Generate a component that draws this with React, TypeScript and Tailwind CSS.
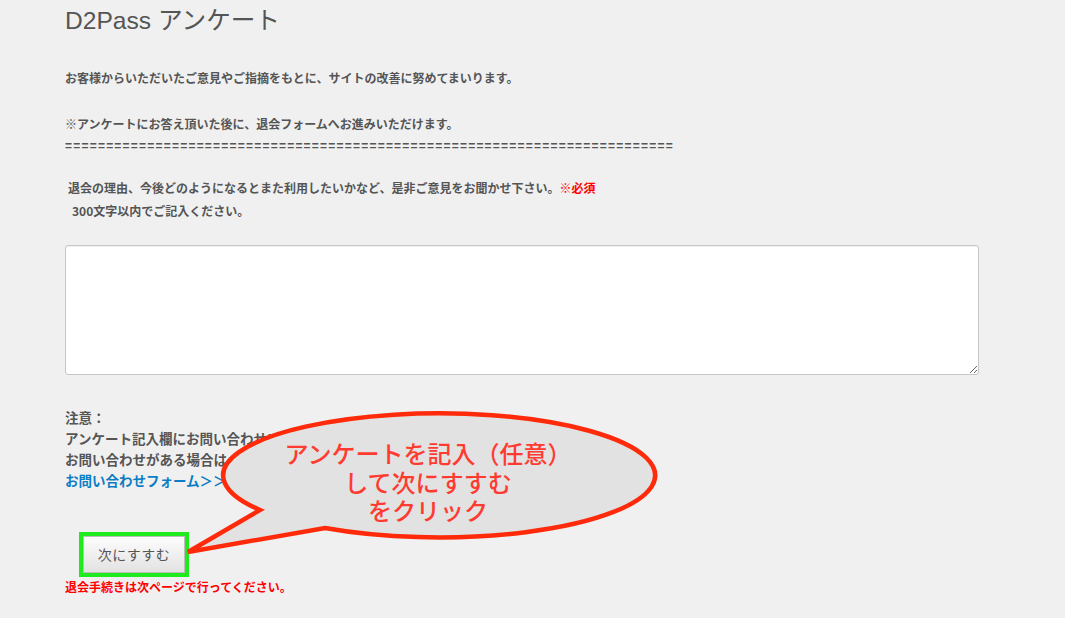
const body = "font-['Noto_Sans_CJK_JP','Liberation_Sans',sans-serif]"

const Callout = () => (
  <>
    <svg
      className="pointer-events-none absolute left-0 top-0"
      width="1065"
      height="618"
      viewBox="0 0 1065 618"
    >
      <path
        d="M 325 528 A 216 62 0 1 0 260 510 L 188 552 Z"
        fill="#e2e2e2"
        stroke="#ff2a0a"
        strokeWidth="4.5"
        strokeLinejoin="miter"
      />
    </svg>
    <div
      className={`pointer-events-none absolute left-[228px] top-[439px] w-[400px] text-center text-[24px] font-[500] leading-[28.5px] text-[#ff3b30] ${body}`}
    >
      <p>アンケートを記入（任意）</p>
      <p>して次にすすむ</p>
      <p>をクリック</p>
    </div>
  </>
)

const App = () => (
  <div className="relative h-[618px] w-[1065px] overflow-hidden bg-[#f0f0f0]">
    <div className={`px-[65px] pt-[6px] text-[12px] font-[700] text-[#555] ${body}`}>
      <h1 className="text-[24.6px] font-[400] leading-[30px] text-[#555] font-['Liberation_Sans','Noto_Sans_CJK_JP',sans-serif]">
        D2Pass アンケート
      </h1>

      <p className="mt-[32px] leading-[20px]">
        お客様からいただいたご意見やご指摘をもとに、サイトの改善に努めてまいります。
      </p>

      <div className="mt-[25px] leading-[22px]">
        <p>※アンケートにお答え頂いた後に、退会フォームへお進みいただけます。</p>
        <p className="font-['Liberation_Sans',sans-serif] tracking-[1.22px]">
          {'='.repeat(74)}
        </p>
      </div>

      <div className="mt-[19px] leading-[23px]">
        <p className="pl-[3px]">
          退会の理由、今後どのようになるとまた利用したいかなど、是非ご意見をお聞かせ下さい。
          <span className="text-[#ff0000]">※必須</span>
        </p>
        <p className="pl-[7px]">300文字以内でご記入ください。</p>
      </div>

      <textarea className="mt-[23px] block h-[130px] w-[914px] rounded-[3px] border border-[#c6c6c6] bg-white shadow-[inset_0_1px_1px_rgba(0,0,0,0.06)] outline-none" />

      <div className="mt-[32px] text-[13.5px] leading-[21px]">
        <p>注意：</p>
        <p>アンケート記入欄にお問い合わせいただいてもご返答できません。</p>
        <p>お問い合わせがある場合は、下記フォームよりお問い合わせください。</p>
        <a href="#" className="text-[#0b7dc5]">
          お問い合わせフォーム＞＞
        </a>
      </div>

      <div className="ml-[14px] mt-[41px] inline-block border-[4px] border-[#1eea1e]">
        <button className="flex h-[37px] w-[102px] items-center justify-center border border-[#bdbdbd] bg-[linear-gradient(#fdfdfd,#e2e2e2)] text-[14px] font-[400] tracking-[0.5px] text-[#555]">
          次にすすむ
        </button>
      </div>

      <p className="leading-[20px] text-[#ff0000]">退会手続きは次ページで行ってください。</p>
    </div>

    <Callout />
  </div>
)

export default App
